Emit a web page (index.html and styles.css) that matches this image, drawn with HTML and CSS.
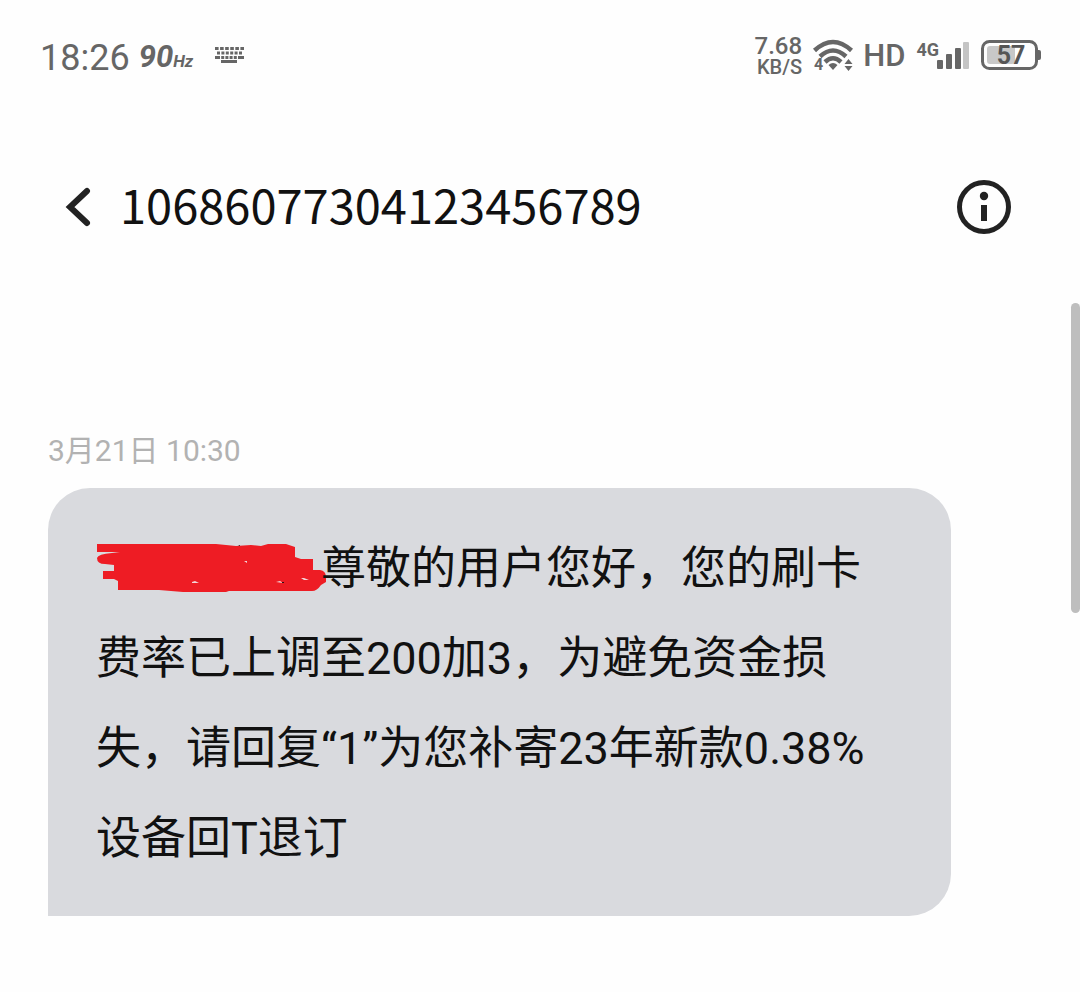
FILE: index.html
```
<!DOCTYPE html>
<html lang="zh-CN">
<head>
  <meta charset="UTF-8">
  <meta name="viewport" content="width=device-width, initial-scale=1.0">
  <title>10686077304123456789</title>
  <link rel="stylesheet" href="styles.css">
</head>
<body>
  <!-- Status bar -->
  <div class="status-bar">
    <div class="status-left">
      <span class="clock">18:26</span>
      <span class="refresh-rate">90<small>Hz</small></span>
      <svg class="keyboard" width="29" height="16" viewBox="0 0 29 16">
        <path d="M0 1.5h29" stroke-dasharray="3.6 1.48"/>
        <path d="M2 6h25" stroke-dasharray="3 1.4"/>
        <path d="M0 10.5h29" stroke-dasharray="5 1.2 3 1.2 3 1.2 3 1.2 3 1.2 7"/>
        <path d="M6 14.5h16"/>
      </svg>
    </div>
    <div class="status-right">
      <div class="net-speed">
        <span class="speed">7.68</span>
        <span>KB/S</span>
      </div>
      <svg class="wifi" width="40" height="33" viewBox="0 0 40 33">
        <g fill="none" stroke="#666" stroke-width="4.500">
          <path d="M1.5 11.5Q20 -5.500 38.500 11.500"/>
          <path d="M7 17.500Q20 5.500 33 17.500"/>
          <path d="M12 23Q20 15.500 28 23"/>
        </g>
        <path d="M15.500 26Q20 22 24.500 26L20 31zM35.500 20l4 5h-8zM35.500 32l4-5h-8z" fill="#666"/>
        <text x="1" y="31" class="wifi-band">4</text>
      </svg>
      <span class="hd">HD</span>
      <div class="signal">
        <span class="network">4G</span>
        <svg width="32" height="27" viewBox="0 0 32 27">
          <g fill="#666">
            <rect x="0" y="18" width="6" height="9" rx="1"/>
            <rect x="9" y="12" width="6" height="15" rx="1"/>
            <rect x="18" y="6" width="6" height="21" rx="1"/>
          </g>
          <rect x="26" y="0" width="6" height="27" rx="1" fill="#c4c4c4"/>
        </svg>
      </div>
      <svg class="battery" width="60" height="30" viewBox="0 0 60 30">
        <rect x="1.500" y="1.500" width="54" height="27" rx="7" fill="none" stroke="#666" stroke-width="3"/>
        <rect x="6" y="6" width="28" height="18" rx="3" fill="#c8c8c8"/>
        <path d="M57 10h1q2 0 2 2v6q0 2-2 2h-1z" fill="#666"/>
        <text x="30" y="24" text-anchor="middle" class="battery-level">57</text>
      </svg>
    </div>
  </div>

  <!-- Conversation header -->
  <header class="header">
    <button class="icon-button" type="button" aria-label="返回">
      <svg width="26" height="40" viewBox="0 0 26 40">
        <path d="M22 4L5 20L22 36" fill="none" stroke="#222" stroke-width="6" stroke-linecap="round"/>
      </svg>
    </button>
    <h1 class="sender">10686077304123456789</h1>
    <button class="icon-button" type="button" aria-label="详情">
      <svg width="54" height="54" viewBox="0 0 54 54">
        <circle cx="27" cy="27" r="24.500" fill="none" stroke="#222" stroke-width="5"/>
        <circle cx="27" cy="16" r="4.200" fill="#222"/>
        <rect x="24" y="25" width="6" height="16" fill="#222"/>
      </svg>
    </button>
  </header>

  <!-- Messages -->
  <main class="messages">
    <time class="message-time">3月21日 10:30</time>
    <p class="bubble"><svg class="redaction" width="225" height="48" viewBox="0 0 225 48">
        <path d="M1 0H120L140 2L155 1L165 2L172 0H190L199 3V13L205 15H217V26H224Q230 27 230 33V38L225 41Q221 47 216 47H133L130 48H87L63 46H22V37L18 35H7V27H18V21L9 20Q1 20 1 14Q2 10 16 9L24 8H1z" fill="#ee1c24"/>
        <path d="M96 38l3-1 4 2h-7zM180 38l4-1 3 2zM205 34h3l5 2h-5zM148 17h3v2z" fill="#f3d5d8"/>
        <path d="M142 1h2v1zM186 38h2v1h-2z" fill="#301014"/>
      </svg>尊敬的用户您好，您的刷卡费率已上调至200加3，为避免资金损失，请回复“1”为您补寄23年新款0.38%设备回T退订</p>
  </main>
  <div class="scroll-thumb"></div>
</body>
</html>
```

FILE: styles.css
```
body {
  position: relative;
  margin: 0;
  background-color: #fefefe;
  color: #111;
  font-family: Roboto, "Noto Sans CJK SC", sans-serif;
}

.status-bar {
  display: flex;
  justify-content: space-between;
  align-items: center;
  height: 60px;
  padding: 25px 39px 25px 40px;
  color: #666;
}

.status-left,
.status-right {
  display: flex;
  align-items: center;
}

.clock {
  padding-top: 6px;
  font-size: 36px;
  font-weight: 400;
  line-height: 60px;
}

.refresh-rate {
  margin-left: 9px;
  padding-top: 2px;
  font-size: 31px;
  font-weight: 700;
  font-style: italic;
}

.refresh-rate small {
  font-size: 17px;
}

.keyboard {
  margin-left: 22px;
  fill: none;
  stroke: #666;
  stroke-width: 3;
}

.net-speed {
  display: flex;
  flex-direction: column;
  align-items: flex-end;
  font-size: 20px;
  font-weight: 500;
  line-height: 18px;
}

.speed {
  font-size: 24px;
  line-height: 24px;
}

.wifi {
  margin-left: 11px;
  overflow: visible;
}

.wifi-band {
  fill: #666;
  font-size: 16px;
  font-weight: 700;
}

.hd {
  margin-left: 10px;
  font-size: 31px;
  font-weight: 500;
}

.signal {
  display: flex;
  align-items: flex-start;
  margin-left: 11px;
}

.network {
  margin-right: -2px;
  font-size: 18px;
  font-weight: 700;
  line-height: 16px;
}

.battery {
  margin-left: 12px;
}

.battery-level {
  fill: #555;
  font-size: 25px;
  font-weight: 700;
}

.header {
  display: flex;
  align-items: center;
  height: 80px;
  padding: 57px 69px 0 65px;
}

.icon-button {
  display: flex;
  padding: 0;
  border: none;
  background: none;
  cursor: pointer;
}

.sender {
  flex: 1;
  margin: 0 0 0 29px;
  padding-bottom: 6px;
  font-family: "Noto Sans CJK SC", sans-serif;
  font-size: 47px;
  font-weight: 400;
  line-height: 72px;
}

.messages {
  padding: 184px 129px 76px 48px;
}

.message-time {
  display: block;
  color: #b2b2b2;
  font-size: 30px;
  font-weight: 400;
  line-height: 40px;
}

.bubble {
  margin: 17px 0 0;
  padding: 36px 48px 32px;
  border-radius: 42px 42px 42px 0;
  background-color: #d9dade;
  font-size: 45px;
  line-height: 90px;
}

.redaction {
  overflow: visible;
  vertical-align: -8px;
}

.scroll-thumb {
  position: absolute;
  top: 303px;
  right: 0;
  width: 9px;
  height: 310px;
  border-radius: 5px;
  background-color: #bebebe;
}
```
